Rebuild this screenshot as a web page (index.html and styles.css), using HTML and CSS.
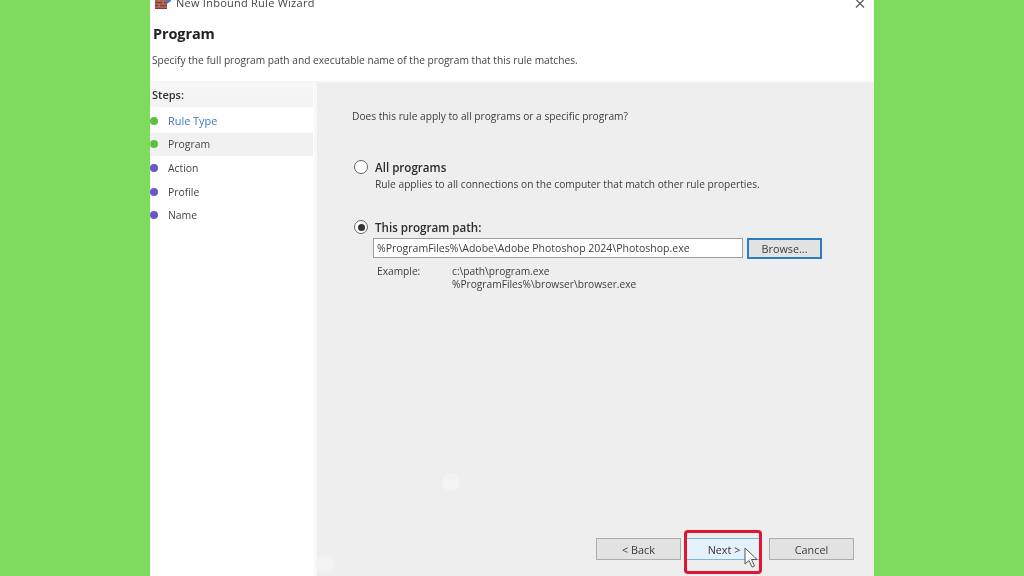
FILE: index.html
```html
<!DOCTYPE html>
<html lang="en">
<head>
<meta charset="utf-8">
<title>New Inbound Rule Wizard</title>
<link rel="stylesheet" href="styles.css">
</head>
<body>
<div class="window">
  <header class="head">
    <div class="titlebar">
      <div class="title-left">
        <svg class="app-icon" width="17" height="12" viewBox="0 0 17 12"><rect x="0" y="1" width="12" height="11" fill="#8a3a2c"/><path d="M0 4h12M0 7h12M0 10h12M4 1v3M8 4v3M4 7v3" stroke="#c9897a" stroke-width="1"/><path d="M11 4l5-4v4l-4 3z" fill="#4a78b8"/></svg>
        <span class="title-text">New Inbound Rule Wizard</span>
      </div>
      <svg class="close" width="12" height="8" viewBox="0 0 12 8"><path d="M2.500 0L10 7.500M9.500 0L2 7.500" stroke="#555" stroke-width="1.200" fill="none"/></svg>
    </div>
    <h1 class="page-title">Program</h1>
    <p class="page-desc">Specify the full program path and executable name of the program that this rule matches.</p>
  </header>
  <div class="divider"></div>
  <div class="content">
    <aside class="steps">
      <div class="steps-head">Steps:</div>
      <ul class="step-list">
        <li class="step done link"><span class="dot"></span>Rule Type</li>
        <li class="step done current"><span class="dot"></span>Program</li>
        <li class="step"><span class="dot"></span>Action</li>
        <li class="step"><span class="dot"></span>Profile</li>
        <li class="step"><span class="dot"></span>Name</li>
      </ul>
    </aside>
    <main class="main">
      <div class="main-body">
        <p class="question">Does this rule apply to all programs or a specific program?</p>
        <div class="option option-all">
          <span class="radio"></span>
          <div class="option-text">
            <div class="option-label">All programs</div>
            <div class="option-hint">Rule applies to all connections on the computer that match other rule properties.</div>
          </div>
        </div>
        <div class="option option-path">
          <span class="radio checked"></span>
          <div class="option-text">
            <div class="option-label">This program path:</div>
            <div class="path-row">
              <div class="path-input">%ProgramFiles%\Adobe\Adobe Photoshop 2024\Photoshop.exe</div>
              <div class="btn browse">Browse...</div>
            </div>
            <div class="example">
              <span class="example-label">Example:</span>
              <span class="example-values">c:\path\program.exe<br>%ProgramFiles%\browser\browser.exe</span>
            </div>
          </div>
        </div>
      </div>
      <footer class="actions">
        <div class="btn action back">&lt; Back</div>
        <div class="btn action next">Next &gt;</div>
        <div class="btn action cancel">Cancel</div>
      </footer>
      <span class="highlight"></span>
      <svg class="cursor" width="16" height="22" viewBox="0 0 16 22"><path d="M1 1v16l4-3.500 3 6.500 2.500-1-3-6.500h5.500z" fill="#fff" stroke="#555" stroke-width="1"/></svg>
      <span class="ghost ghost-a"></span>
      <span class="ghost ghost-b"></span>
    </main>
  </div>
</div>
</body>
</html>
```
FILE: styles.css
```css
* { box-sizing: border-box; }
html, body { margin: 0; height: 100%; }
body {
  background: #7edb5b;
  font-family: "Open Sans", "Noto Sans", sans-serif;
  font-size: 10.2px;
  color: #3c3c3c;
  overflow: hidden;
}
.window {
  width: 724px;
  height: 576px;
  margin-left: 150px;
  background: #fff;
  display: flex;
  flex-direction: column;
  overflow: hidden;
  filter: blur(0.35px);
}
.head { height: 81px; padding: 0 8px 0 2px; flex: none; }
.titlebar {
  height: 9px;
  display: flex;
  justify-content: space-between;
  align-items: flex-start;
  overflow: hidden;
  padding-left: 3px;
}
.title-left { display: flex; align-items: flex-end; gap: 4px; height: 9px; }
.app-icon { flex: none; }
.title-text { font-size: 11px; line-height: 14px; color: #444; letter-spacing: 0.25px; margin-bottom: -1px; }
.close { flex: none; }
.page-title {
  margin: 16px 0 0 1px;
  font-size: 14.5px;
  line-height: 18px;
  font-weight: 700;
  color: #222;
  letter-spacing: -0.1px;
}
.page-desc { margin: 10px 0 0; font-size: 10.2px; line-height: 15px; color: #444; }
.divider { height: 2px; background: #f5f5f5; flex: none; }
.content { flex: 1; display: flex; min-height: 0; }
.steps { width: 167px; flex: none; border-right: 3px solid #f8f8f8; }
.steps-head {
  height: 24px;
  padding: 4px 0 0 2px;
  font-size: 11px;
  line-height: 16px;
  font-weight: 600;
  color: #333;
  background: linear-gradient(#f7f7f7, #f3f3f3);
  margin-right: 1px;
}
.step-list { list-style: none; margin: 2px 0 0; padding: 0; }
.step {
  height: 23.6px;
  margin-right: 1px;
  display: flex;
  align-items: center;
  font-size: 10.4px;
  color: #444;
}
.step.link { font-size: 10.9px; }
.dot {
  width: 8px;
  height: 8px;
  border-radius: 50%;
  margin-right: 10px;
  background: #6a56c8;
  flex: none;
}
.done .dot { background: #5cc044; }
.link { color: #3d77bd; }
.current { background: #f1f1f1; }
.main {
  flex: 1;
  background: #eeeeee;
  position: relative;
  display: flex;
  flex-direction: column;
  justify-content: space-between;
  min-width: 0;
}
.main-body { padding: 26px 0 0 35px; }
.question { margin: 0; line-height: 15px; }
.option { display: flex; margin-left: -1px; }
.option-all { margin-top: 36px; }
.option-path { margin-top: 28px; }
.radio {
  width: 14px;
  height: 14px;
  margin: 0 7px 0 3px;
  border-radius: 50%;
  border: 1.500px solid #666;
  background: #fff;
  flex: none;
  display: flex;
  align-items: center;
  justify-content: center;
}
.radio.checked::after {
  content: "";
  width: 7px;
  height: 7px;
  border-radius: 50%;
  background: #333;
}
.option-text { min-width: 0; }
.option-label { font-size: 11.6px; line-height: 16px; font-weight: 600; color: #2c2c2c; }
.option-hint { margin-top: 1px; line-height: 15px; }
.path-row { display: flex; gap: 4px; margin: 2px 0 0 -2px; }
.path-input {
  width: 370px;
  height: 20px;
  background: #fff;
  border: 1px solid #9c9c9c;
  padding: 0 3px;
  font-size: 10.5px;
  line-height: 18px;
  white-space: nowrap;
}
.btn {
  display: flex;
  align-items: center;
  justify-content: center;
  background: #e2e2e2;
  border: 1px solid #adadad;
  color: #3c3c3c;
  font-size: 10.8px;
}
.browse { width: 75px; height: 21px; border: 2px solid #2a7fc4; }
.example { display: flex; margin: 6px 0 0 2px; line-height: 13px; }
.example-label { width: 75px; flex: none; }
.actions { display: flex; padding: 0 20px 16px 0; justify-content: flex-end; }
.action { width: 85px; height: 22px; }
.next {
  width: 74px;
  margin: 0 8px 0 6px;
  background: #e5f1fb;
  border: 0;
  border-top: 1px solid #7bb6e0;
  border-bottom: 1px solid #7bb6e0;
  color: #333;
}
.highlight {
  position: absolute;
  left: 367px;
  top: 447px;
  width: 78px;
  height: 44px;
  border: 3px solid #e01530;
  border-radius: 4px;
}
.cursor { position: absolute; left: 427px; top: 464px; }
.ghost {
  position: absolute;
  width: 18px;
  height: 18px;
  border-radius: 50%;
  background: #f3f3f3;
}
.ghost-a { left: 125px; top: 390px; }
.ghost-b { left: -1px; top: 472px; }
```
